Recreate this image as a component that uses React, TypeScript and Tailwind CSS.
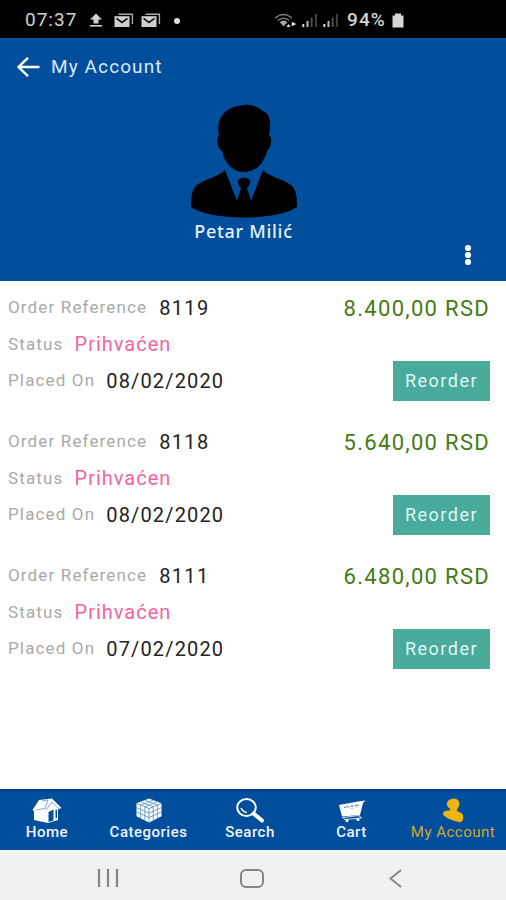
import type { ReactNode } from "react";

type Order = { reference: string; status: string; placedOn: string; total: string };

const orders: Order[] = [
  { reference: "8119", status: "Prihvaćen", placedOn: "08/02/2020", total: "8.400,00 RSD" },
  { reference: "8118", status: "Prihvaćen", placedOn: "08/02/2020", total: "5.640,00 RSD" },
  { reference: "8111", status: "Prihvaćen", placedOn: "07/02/2020", total: "6.480,00 RSD" },
];

function MailIcon() {
  return (
    <svg width="20" height="15" viewBox="0 0 20 15" fill="none">
      <path d="M4.5 1.2H18.4V11" stroke="#aaa" strokeWidth="1.4" />
      <path d="M0.5 3.2H15.5V14H0.5Z" fill="#d0d0d0" />
      <path d="M2.5 5.4L8 9.4L13.5 5.4" stroke="#111" strokeWidth="1.7" />
    </svg>
  );
}

function SignalIcon() {
  return (
    <svg width="16" height="15" viewBox="0 0 16 15">
      <path d="M0.3 11h2v3h-2z" fill="#ddd" />
      <path d="M4.5 8h2v6h-2z" fill="#bbb" />
      <path d="M8.8 4.5h1.8v9.5H8.8z" fill="#555" />
      <path d="M13 1h1.8v13H13z" fill="#444" />
    </svg>
  );
}

function StatusBar() {
  return (
    <div className="flex h-[38px] items-center bg-black pt-[3px] pl-[25px] text-[19px] text-[#d2d2d2]">
      <span className="w-[64px] tracking-[1px]">07:37</span>
      <svg width="14" height="15" viewBox="0 0 14 15" fill="#cfcfcf" className="mr-[11px]">
        <path d="M7 0.5L13 6.5H9.5V10.5H4.5V6.5H1Z" />
        <path d="M1 12h12v1.6H1z" />
      </svg>
      <div className="flex w-[60px] gap-[7px]">
        <MailIcon />
        <MailIcon />
      </div>
      <div className="size-[6px] rounded-full bg-[#ddd]" />
      <svg width="23" height="16" viewBox="0 0 23 16" fill="none" className="mr-[5px] ml-[94px]">
        <path d="M1 5.2Q9.5 -2.2 18 5.2M3.8 7.6Q9.5 2.8 15.3 7.6" stroke="#777" strokeWidth="1.5" />
        <path d="M5.7 9.2Q9.5 5.8 13.5 9.2L9.5 13.2Z" fill="#aaa" />
        <path d="M12.5 14L14.5 11L16.5 14ZM17.8 8.7L22.4 11.1L17.8 13.5Z" fill="#ddd" />
      </svg>
      <div className="mr-[8px] flex gap-[5px]">
        <SignalIcon />
        <SignalIcon />
      </div>
      <span className="w-[45px] font-medium tracking-[1.1px]">94%</span>
      <svg width="12" height="15" viewBox="0 0 12 15" fill="#d6d6d6">
        <path d="M3 0.5h6v2h2.5V14.5H0.5V2.5H3Z" />
      </svg>
    </div>
  );
}

function Header() {
  return (
    <header className="flex h-[243px] flex-col bg-[#004e9c] text-white">
      <div className="flex h-[58px] items-center pl-[16px]">
        <svg width="25" height="20" viewBox="0 0 25 20" fill="none" stroke="#fff" strokeWidth="2.4">
          <path d="M23.5 10H2.5M12 0.8L2.5 10L12 19.2" />
        </svg>
        <h1 className="ml-[10px] text-[19px] tracking-[1.1px] text-[#dce9f7]">My Account</h1>
      </div>
      <div className="flex flex-col items-center pt-[8px] pr-[19px]">
        <svg width="106" height="114" viewBox="0 0 106 114" fill="#000">
          <path d="M53 1C62 0 68 4 72 7C80 10 80 21 78 32C82 33 80 44 76 47C73 60 64 68 53 68C42 68 34 60 31 47C26 44 25 33 28 32C25 18 30 3 53 1Z" />
          <path d="M34 66C27 73 14 75 6 81C0 86 0 96 0 103C10 110 31 113.5 53 113.5C75 113.5 96 110 106 103C106 96 106 86 100 81C92 75 79 73 72 66L60 97L56 84Q60 80 59 76Q53 71 47 76Q46 80 50 84L46 97Z" />
        </svg>
        <div className="font-['Noto_Sans'] text-[18px] leading-[26px] font-medium tracking-[0.7px] text-[#e8f0fb]">
          Petar Milić
        </div>
      </div>
      <svg width="8" height="22" viewBox="0 0 8 22" fill="#fff" className="mr-[34px] self-end">
        <circle cx="4" cy="4" r="3.1" />
        <circle cx="4" cy="11" r="3.1" />
        <circle cx="4" cy="18" r="3.1" />
      </svg>
    </header>
  );
}

function Field({ label, children }: { label: string; children: ReactNode }) {
  return (
    <div className="flex h-[36.5px] items-center">
      <span className="mr-[11px] text-[17px] tracking-[1.15px] text-[#a9a9a9]">{label}</span>
      {children}
    </div>
  );
}

function OrderRow({ order }: { order: Order }) {
  return (
    <div className="flex h-[134px] justify-between pt-[8.5px] pr-[16px] pl-[8px]">
      <div>
        <Field label="Order Reference">
          <span className="ml-[1px] text-[20px] tracking-[1.3px] text-[#222]">{order.reference}</span>
        </Field>
        <Field label="Status">
          <span className="text-[20px] tracking-[1px] text-[#f263a1]">{order.status}</span>
        </Field>
        <Field label="Placed On">
          <span className="text-[20px] tracking-[1.15px] text-[#222]">{order.placedOn}</span>
        </Field>
      </div>
      <div className="flex flex-col items-end">
        <div className="flex h-[37px] items-center text-[22px] tracking-[1.3px] text-[#447a14]">
          {order.total}
        </div>
        <button className="mt-[34.5px] h-[40px] w-[97px] bg-[#48ab9c] pb-px text-[18px] tracking-[1.5px] text-[#e2f7f3]">
          Reorder
        </button>
      </div>
    </div>
  );
}

function HomeIcon() {
  return (
    <svg width="30" height="25" viewBox="0 0 30 25">
      <path d="M7 2L20 0.5L29.5 10L26 11.5V22L16 25L2 22V13L0.5 12Z" fill="#fff" />
      <path d="M10 3L16 2L13 10.5L4 12M14 12L20 4L27 11" fill="none" stroke="#7fa9d6" strokeWidth="1" />
      <path d="M16.5 14L21.5 11.5V22.5L16.5 24ZM23.5 12L25 11.5V20L23.5 20.5Z" fill="#004e9c" />
    </svg>
  );
}

function CubeIcon() {
  return (
    <svg width="28" height="25" viewBox="0 0 28 26">
      <path d="M14 0.5L27 5.5V19L14 25.5L1 19V5.5Z" fill="#fff" />
      <path
        d="M1 5.5L14 11L27 5.5M14 11V25M5.3 3.9L18.3 9.2V23M9.7 2.2L22.7 7.4V21M22.7 3.9L9.7 9.2V23M18.3 2.2L5.3 7.4V21M1 10L14 15.7L27 10M1 14.5L14 20.3L27 14.5"
        fill="none"
        stroke="#5f93c9"
        strokeWidth="0.9"
      />
    </svg>
  );
}

function SearchIcon() {
  return (
    <svg width="28" height="25" viewBox="0 0 28 25" fill="none" stroke="#fff">
      <ellipse cx="10.5" cy="9.5" rx="9.3" ry="8.5" strokeWidth="2" />
      <path d="M5 10Q7 14 11 14.5" strokeWidth="1.5" />
      <path d="M17.5 15.5L26 22.5" strokeWidth="4" strokeLinecap="round" />
    </svg>
  );
}

function CartIcon() {
  return (
    <svg width="28" height="25" viewBox="0 0 28 25">
      <path d="M1 7L20 3.5L27.5 2.5L25 5L22 17L4 18.5Z" fill="#fff" />
      <path d="M5 19.5L21 17.5L23 20L7 21.5Z" fill="none" stroke="#b9d2e9" strokeWidth="1.2" />
      <path d="M6 9.5L21 7.5M9 7.5V11M14 6.500V11M19 6V10" stroke="#4b84be" strokeWidth="1" strokeDasharray="2 1.5" />
      <circle cx="9" cy="22.5" r="1.5" fill="#fff" />
      <circle cx="20" cy="21.5" r="1.5" fill="#fff" />
    </svg>
  );
}

function AccountIcon() {
  return (
    <svg width="22" height="25" viewBox="0 0 22 26" fill="#f0b40e">
      <path d="M12 0.5C16 0.5 18.5 4 17.5 7.5C17 10 15 11 15 13C17 15 21.5 15 21.5 19C22 22 21 25 18 25.2C12 24 3 21 0.5 17C0.5 14 3 12.5 7.5 13L8 11C3 9 3 1 12 0.5Z" />
    </svg>
  );
}

const tabs = [
  { label: "Home", icon: <HomeIcon />, width: "w-[94px]" },
  { label: "Categories", icon: <CubeIcon />, width: "w-[109px]" },
  { label: "Search", icon: <SearchIcon />, width: "w-[94px]" },
  { label: "Cart", icon: <CartIcon />, width: "w-[109px]" },
];

function TabBar() {
  return (
    <nav className="flex h-[61px] border-t-2 border-[#003a92] bg-[#004e9c] text-[15px] leading-[18px] font-medium tracking-[0.5px] text-[#eef5fc]">
      {tabs.map((tab) => (
        <div key={tab.label} className={`flex flex-col items-center pt-[7px] ${tab.width}`}>
          {tab.icon}
          <span>{tab.label}</span>
        </div>
      ))}
      <div className="flex w-[94px] flex-col items-center pt-[7px] font-normal text-[#d3a92d]">
        <AccountIcon />
        <span>My Account</span>
      </div>
    </nav>
  );
}

export default function App() {
  return (
    <div className="flex h-[900px] w-[506px] flex-col overflow-hidden bg-white font-['Roboto',sans-serif] whitespace-nowrap">
      <StatusBar />
      <Header />
      <main className="flex-1">
        {orders.map((order) => (
          <OrderRow key={order.reference} order={order} />
        ))}
      </main>
      <TabBar />
      <div className="flex h-[50px] items-center bg-[#f1f1f1] pt-[6px] pl-[97px]">
        <svg width="22" height="18" viewBox="0 0 22 18" stroke="#858585" strokeWidth="2.2">
          <path d="M2 0V18M11 0V18M20 0V18" />
        </svg>
        <div className="ml-[121px] h-[19px] w-[24px] rounded-[6px] border-2 border-[#858585]" />
        <svg width="13" height="19" viewBox="0 0 13 19" fill="none" stroke="#858585" strokeWidth="1.9" className="ml-[125px]">
          <path d="M12 1L1.5 9.5L12 18" />
        </svg>
      </div>
    </div>
  );
}
